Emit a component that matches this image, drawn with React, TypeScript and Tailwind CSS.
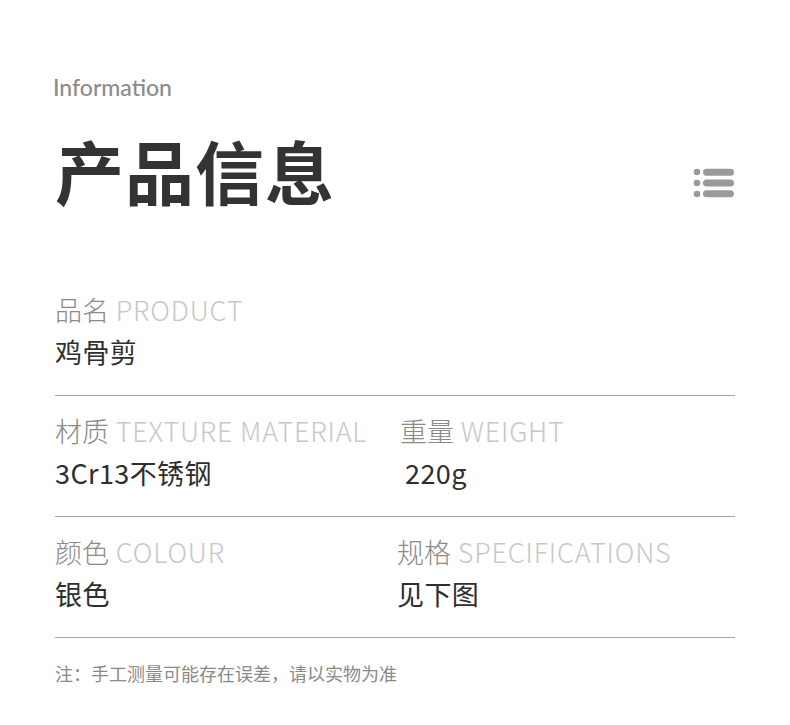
import React from "react";

const cjk = { fontFamily: '"Noto Sans CJK SC", "Noto Sans", sans-serif' };

// List icon at top right of heading
const ListIcon = () => (
  <svg width="42" height="32" viewBox="0 0 42 32" fill="#9a9a9a">
    <circle cx="4" cy="5" r="3.3" />
    <circle cx="4" cy="16" r="3.3" />
    <circle cx="4" cy="27" r="3.3" />
    <rect x="10" y="1.8" width="31" height="7" rx="3.5" />
    <rect x="10" y="12.5" width="31" height="7" rx="3.5" />
    <rect x="10" y="23.3" width="31" height="7" rx="3.5" />
  </svg>
);

type Cell = { cn: string; en: string; value: string; valuePad?: boolean };

const Field = ({ cn, en, value, valuePad }: Cell) => (
  <div className="flex flex-col">
    <div className="text-[27px] leading-[40px] font-light whitespace-nowrap">
      <span className="text-[#8a8a8a]">{cn}</span>
      <span className="text-[#c8c8c8] tracking-[0.8px]"> {en}</span>
    </div>
    <div className={`mt-[2px] text-[27px] leading-[40px] text-[#2e2e2e] tracking-[0.4px] ${valuePad ? "pl-[5px]" : ""}`}>
      {value}
    </div>
  </div>
);

export default function App() {
  return (
    <div className="w-[790px] h-[725px] bg-white px-[55px] pt-[71px]" style={cjk}>
      {/* Heading */}
      <div
        className="text-[23px] leading-[32px] text-[#8c8c8c] font-medium -ml-[2px]"
        style={{ fontFamily: 'Lato, "Noto Sans", sans-serif' }}
      >
        Information
      </div>
      <div className="flex items-center justify-between mt-[22px]">
        <h1 className="text-[69px] leading-[90px] font-bold text-[#333333] tracking-[1px]">产品信息</h1>
        <div className="mt-[26px]">
          <ListIcon />
        </div>
      </div>

      {/* Rows */}
      <div className="mt-[75px]">
        <div className="pb-[23px] border-b border-[#a8a8a8]">
          <Field cn="品名" en="PRODUCT" value="鸡骨剪" />
        </div>
        <div className="grid grid-cols-[345px_1fr] pt-[15px] pb-[23px] border-b border-[#a8a8a8]">
          <Field cn="材质" en="TEXTURE MATERIAL" value="3Cr13不锈钢" />
          <Field cn="重量" en="WEIGHT" value="220g" valuePad />
        </div>
        <div className="grid grid-cols-[342px_1fr] pt-[15px] pb-[23px] border-b border-[#a8a8a8]">
          <Field cn="颜色" en="COLOUR" value="银色" />
          <Field cn="规格" en="SPECIFICATIONS" value="见下图" />
        </div>
        <div className="mt-[22px] text-[18px] leading-[26px] text-[#8a8a8a]">
          注：手工测量可能存在误差，请以实物为准
        </div>
      </div>
    </div>
  );
}
